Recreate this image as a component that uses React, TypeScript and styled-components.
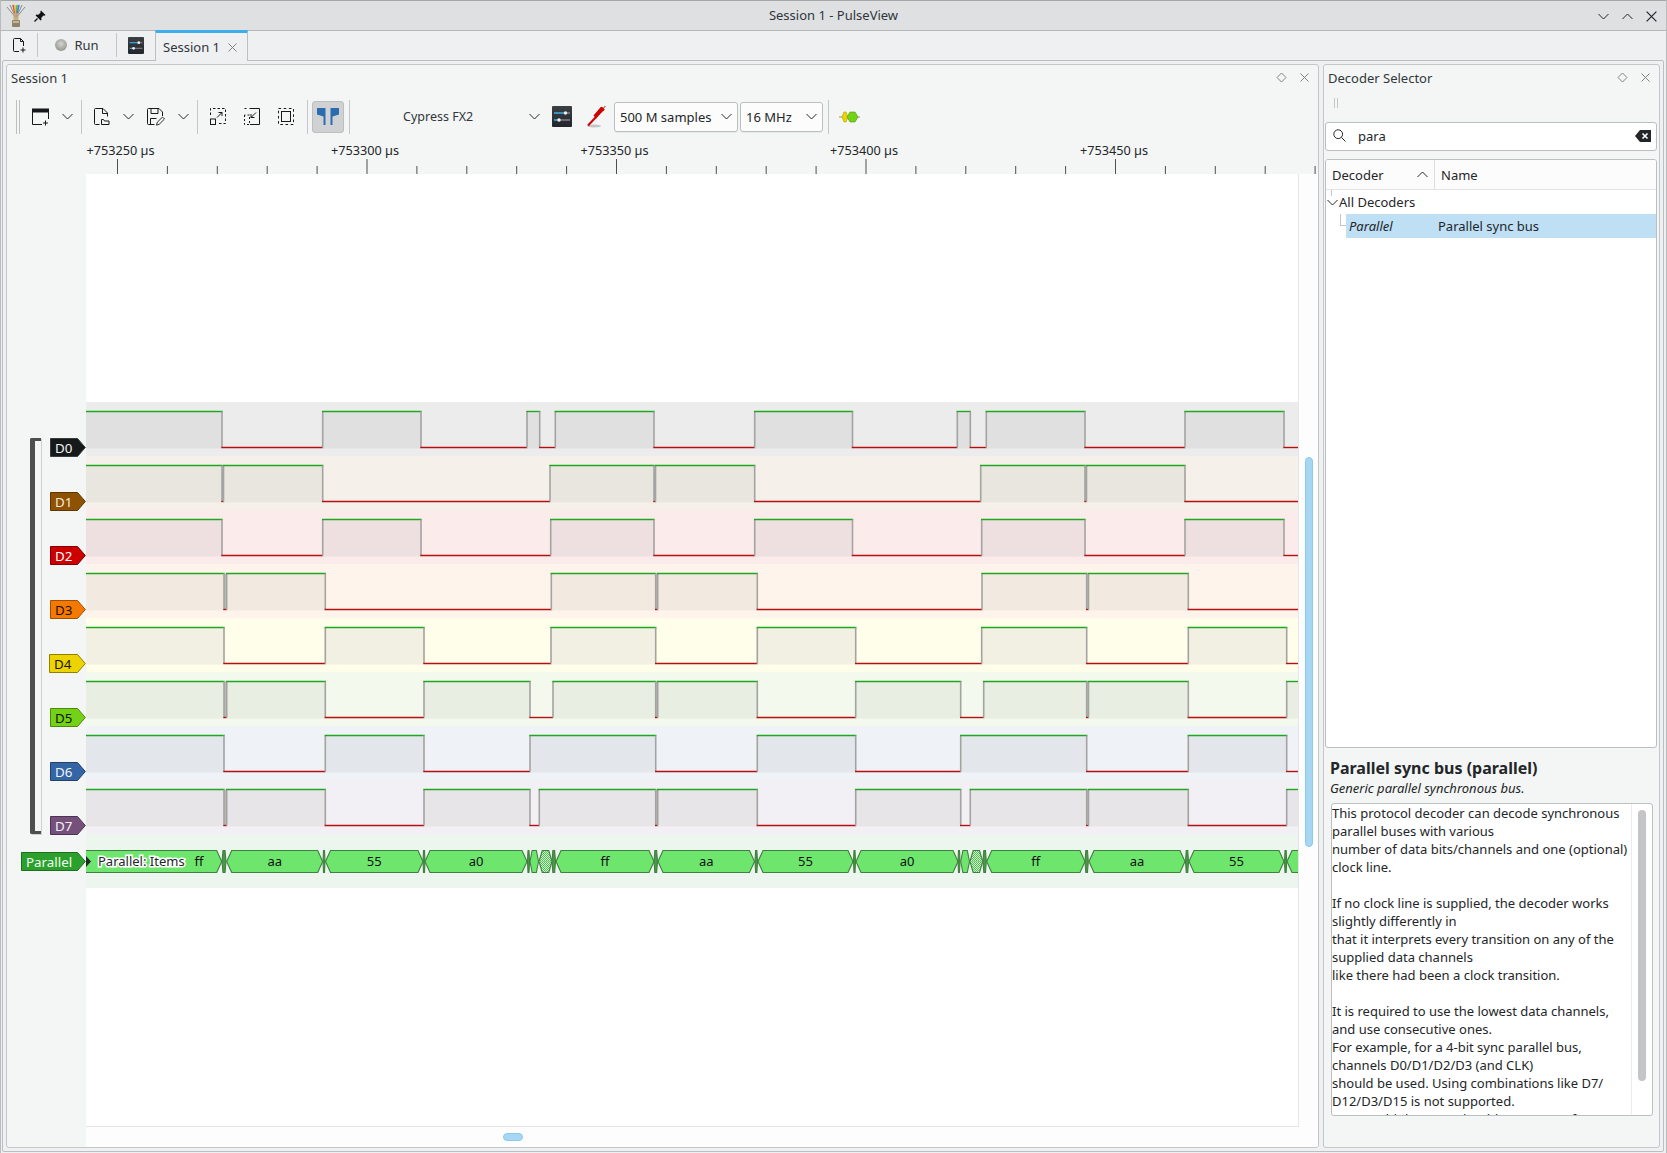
import React from 'react';
import styled, { createGlobalStyle } from 'styled-components';

const FONT = '"Noto Sans", "Open Sans", sans-serif';
const TEXT = '#232629';

const GlobalStyle = createGlobalStyle`
  html, body {
    margin: 0;
    padding: 0;
    background: #eff0f1;
  }
  * {
    box-sizing: border-box;
  }
`;

type Channel = {
  name: string;
  color: string;
  edge: string;
  ink: string;
  bg: string;
  fill: string;
  edges: number[];
};

const CHANNELS: Channel[] = [
  {
    name: 'D0', color: '#16191a', edge: '#3a3d3e', ink: '#f2f2f2', bg: '#ececec', fill: '#e0e0e0',
    edges: [222, 322.7, 421, 527, 539.7, 555.3, 654, 754.7, 852.5, 957.3, 970.3, 986.3, 1085, 1185, 1284],
  },
  {
    name: 'D1', color: '#8f5202', edge: '#5e3601', ink: '#f4ead8', bg: '#f5f1ea', fill: '#e9e6df',
    edges: [222, 223.5, 322.7, 550, 654, 655.5, 754.7, 980.7, 1085, 1086.5, 1185],
  },
  {
    name: 'D2', color: '#cc0000', edge: '#850000', ink: '#ffffff', bg: '#fbebeb', fill: '#eee0e0',
    edges: [222, 322.7, 421, 550.7, 654, 754.7, 852.5, 981.7, 1085, 1185, 1284],
  },
  {
    name: 'D3', color: '#f57900', edge: '#a04f00', ink: '#1a1000', bg: '#fef4eb', fill: '#f2e9e0',
    edges: [224, 226.7, 325.3, 551.3, 655.7, 657.7, 757.3, 982, 1086.7, 1088.5, 1188.3],
  },
  {
    name: 'D4', color: '#edd400', edge: '#8f8000', ink: '#1a1700', bg: '#fefeeb', fill: '#f2f0e2',
    edges: [224, 325.3, 424, 551, 655.7, 757.3, 855.7, 981.7, 1086.7, 1188.3, 1286.7],
  },
  {
    name: 'D5', color: '#73d216', edge: '#4b890e', ink: '#0c1802', bg: '#f3f9ec', fill: '#e8eee2',
    edges: [224, 226.7, 325.3, 424, 530, 553, 655.7, 657.7, 757.3, 855.7, 960.7, 983.7, 1086.7, 1088.5, 1188.3, 1286.7],
  },
  {
    name: 'D6', color: '#3465a4', edge: '#22426b', ink: '#f0f4fa', bg: '#eff2f7', fill: '#e3e6eb',
    edges: [224, 325.3, 424, 530, 655.7, 757.3, 855.7, 960.7, 1086.7, 1188.3, 1286.7],
  },
  {
    name: 'D7', color: '#75507b', edge: '#4c3450', ink: '#f6f0f7', bg: '#f2f0f4', fill: '#e7e5e8',
    edges: [224, 226.7, 325.3, 424, 530, 539.3, 655.7, 657.7, 757.3, 855.7, 960.7, 970.3, 1086.7, 1088.5, 1188.3, 1286.7],
  },
];

type Segment = { x0: number; x1: number; label?: string; cx?: number; kind?: 'thin' | 'hatch' };

const SEGMENTS: Segment[] = [
  { x0: 40, x1: 221.7, label: 'ff', cx: 199 },
  { x0: 222, x1: 226, kind: 'thin' },
  { x0: 226.7, x1: 322.7, label: 'aa' },
  { x0: 323, x1: 325, kind: 'thin' },
  { x0: 325.5, x1: 423, label: '55' },
  { x0: 423, x1: 425, kind: 'thin' },
  { x0: 425, x1: 527, label: 'a0' },
  { x0: 527.5, x1: 529.5, kind: 'thin' },
  { x0: 530, x1: 538.5, kind: 'thin' },
  { x0: 539, x1: 552, kind: 'hatch' },
  { x0: 552, x1: 555.5, kind: 'thin' },
  { x0: 556, x1: 654, label: 'ff' },
  { x0: 654, x1: 657.5, kind: 'thin' },
  { x0: 658, x1: 754.5, label: 'aa' },
  { x0: 755, x1: 757.5, kind: 'thin' },
  { x0: 758, x1: 853, label: '55' },
  { x0: 853.5, x1: 855.5, kind: 'thin' },
  { x0: 856, x1: 958, label: 'a0' },
  { x0: 958, x1: 960, kind: 'thin' },
  { x0: 960.7, x1: 969.5, kind: 'thin' },
  { x0: 970, x1: 982.7, kind: 'hatch' },
  { x0: 983, x1: 986.3, kind: 'thin' },
  { x0: 986.7, x1: 1085, label: 'ff' },
  { x0: 1085, x1: 1088.3, kind: 'thin' },
  { x0: 1089, x1: 1185, label: 'aa' },
  { x0: 1185.5, x1: 1188.5, kind: 'thin' },
  { x0: 1189, x1: 1284, label: '55' },
  { x0: 1284.5, x1: 1286.7, kind: 'thin' },
  { x0: 1287, x1: 1340 },
];

const DESCRIPTION = `This protocol decoder can decode synchronous
parallel buses with various
number of data bits/channels and one (optional)
clock line.

If no clock line is supplied, the decoder works
slightly differently in
that it interprets every transition on any of the
supplied data channels
like there had been a clock transition.

It is required to use the lowest data channels,
and use consecutive ones.
For example, for a 4-bit sync parallel bus,
channels D0/D1/D2/D3 (and CLK)
should be used. Using combinations like D7/
D12/D3/D15 is not supported.
For an 8-bit bus you should use D0-D7, for a`;

const PLOT_LEFT = 86;
const PLOT_WIDTH = 1212;
const ROW_HEIGHT = 54;
const HIGH_Y = 9.5;
const LOW_Y = 45.5;

const Waveform = ({ channel }: { channel: Channel }) => {
  const stops = [PLOT_LEFT, ...channel.edges, PLOT_LEFT + PLOT_WIDTH];
  const parts: React.ReactNode[] = [];

  stops.slice(0, -1).forEach((start, i) => {
    const end = stops[i + 1];
    const a = start - PLOT_LEFT;
    const b = end - PLOT_LEFT;
    const high = i % 2 === 0;
    if (high) {
      parts.push(<rect key={`f${i}`} x={a} y={HIGH_Y} width={b - a} height={LOW_Y - HIGH_Y + 1} fill={channel.fill} />);
    } else if (b - a < 4) {
      parts.push(<rect key={`g${i}`} x={a} y={HIGH_Y} width={b - a} height={LOW_Y - HIGH_Y - 0.5} fill="#bcbcb8" />);
    }
    if (i > 0) {
      parts.push(<line key={`e${i}`} x1={a} x2={a} y1={HIGH_Y} y2={LOW_Y} stroke="#a3a3a0" strokeWidth={1.6} />);
    }
    parts.push(
      <line
        key={`l${i}`}
        x1={a - 0.7}
        x2={b + 0.7}
        y1={high ? HIGH_Y : LOW_Y}
        y2={high ? HIGH_Y : LOW_Y}
        stroke={high ? '#1fa81f' : '#b50f0f'}
        strokeWidth={1.4}
      />,
    );
  });

  return (
    <TraceSvg width={PLOT_WIDTH} height={ROW_HEIGHT}>
      {parts}
    </TraceSvg>
  );
};

const Annotations = () => {
  const top = 16.5;
  const bottom = 38.5;
  const mid = (top + bottom) / 2;
  return (
    <TraceSvg width={PLOT_WIDTH} height={ROW_HEIGHT}>
      <defs>
        <pattern id="hatch" width="2" height="2" patternUnits="userSpaceOnUse">
          <rect width="2" height="2" fill="#cdf2cd" />
          <rect width="1" height="1" fill="#52c052" />
          <rect x="1" y="1" width="1" height="1" fill="#52c052" />
        </pattern>
      </defs>
      {SEGMENTS.map((s, i) => {
        const a = s.x0 - PLOT_LEFT;
        const b = s.x1 - PLOT_LEFT;
        const slant = Math.min(5, (b - a) * 0.25);
        const points = `${a},${mid} ${a + slant},${top} ${b - slant},${top} ${b},${mid} ${b - slant},${bottom} ${a + slant},${bottom}`;
        const fill = s.kind === 'hatch' ? 'url(#hatch)' : b - a < 5 ? '#4f944f' : '#6ee66e';
        return (
          <g key={i}>
            <polygon points={points} fill={fill} stroke="#3f7f3f" strokeWidth={1.1} />
            {s.kind === 'hatch' && <line x1={a} x2={b} y1={mid} y2={mid} stroke="#8fd08f" strokeWidth={0.8} />}
            {s.label && (
              <AnnotationText x={(s.cx ?? (s.x0 + s.x1) / 2) - PLOT_LEFT} y={mid + 4.5} textAnchor="middle">
                {s.label}
              </AnnotationText>
            )}
          </g>
        );
      })}
      <polygon points="0,22 5,27.5 0,33" fill="#222629" />
      <ItemsText x={12} y={32}>
        Parallel: Items
      </ItemsText>
    </TraceSvg>
  );
};

const TraceLabel = ({ text, width, color, edge, ink }: { text: string; width: number; color: string; edge: string; ink: string }) => (
  <svg width={width} height={19} style={{ display: 'block' }}>
    <polygon
      points={`0.5,0.5 ${width - 8.5},0.5 ${width - 0.7},9.5 ${width - 8.5},18.5 0.5,18.5`}
      fill={color}
      stroke={edge}
      strokeWidth={1}
    />
    <LabelText x={5} y={14.5} fill={ink}>
      {text}
    </LabelText>
  </svg>
);

const Ruler = () => {
  const ticks = Array.from({ length: 25 }, (_, i) => 117.5 + i * 49.9);
  const labels = [
    { x: 86.5, text: '+753250 µs' },
    { x: 331, text: '+753300 µs' },
    { x: 580.5, text: '+753350 µs' },
    { x: 830, text: '+753400 µs' },
    { x: 1080, text: '+753450 µs' },
  ];
  return (
    <RulerSvg width={1311} height={40}>
      {labels.map((l) => (
        <RulerText key={l.text} x={l.x - 7} y={20.5}>
          {l.text}
        </RulerText>
      ))}
      {ticks.map((x, i) => (
        <line key={x} x1={x - 7} x2={x - 7} y1={i % 5 === 0 ? 25 : 32} y2={40} stroke="#3a3d3f" strokeWidth={0.9} />
      ))}
    </RulerSvg>
  );
};

/* ---- icons ---- */

const Chevron = ({ up }: { up?: boolean }) => (
  <svg width="11" height="7" viewBox="0 0 11 7">
    <path d={up ? 'M.5 6 5.5 1l5 5' : 'M.5 1l5 5 5-5'} fill="none" stroke={TEXT} strokeWidth="1" />
  </svg>
);

const AppLogo = () => (
  <svg width="20" height="24" viewBox="0 0 20 24">
    <path d="M10 14 1 3M10 14 4 1M10 14 19 3M10 14 16 1" stroke="#8a8d8f" strokeWidth="1" />
    <path d="M10 14 7 1" stroke="#d9534f" strokeWidth="1.6" />
    <path d="M10 14 9 1" stroke="#e8c33a" strokeWidth="1.6" />
    <path d="M10 14 11 1" stroke="#5cb85c" strokeWidth="1.6" />
    <path d="M10 14 13 1" stroke="#4a80c4" strokeWidth="1.6" />
    <path d="M7 9h6l-.6 7H7.6z" fill="#c9a877" opacity=".85" />
    <rect x="6" y="16" width="8" height="7" rx="1" fill="#8f8468" />
    <rect x="7" y="17" width="6" height="2" fill="#c4b797" />
  </svg>
);

const PinIcon = () => (
  <svg width="12" height="12" viewBox="0 0 12 12">
    <path d="M7 .5 11.5 5l-1 .8-1-.3L7.3 7.7l.2 2-.9.8L1.6 5.5l.8-.9 2 .2 2.2-2.2-.3-1z" fill="#111" />
    <path d="M3.5 8.5 .5 11.5" stroke="#111" strokeWidth="1.2" />
  </svg>
);

const NewPageIcon = () => (
  <svg width="16" height="16" viewBox="0 0 16 16" fill="none" stroke="#16191a" strokeWidth="1">
    <path d="M8 14.5H3.5a1 1 0 0 1-1-1v-11a1 1 0 0 1 1-1h6l3 3V9" />
    <path d="M9.5 1.5v3h3" />
    <path d="M12 10.5v5M9.5 13h5" />
  </svg>
);

const SlidersIcon = ({ size }: { size: number }) => (
  <svg width={size} height={size + 1} viewBox="0 0 20 21">
    <defs>
      <linearGradient id={`sl${size}`} x1="0" y1="0" x2="0" y2="1">
        <stop offset="0" stopColor="#3b4045" />
        <stop offset="1" stopColor="#22262a" />
      </linearGradient>
    </defs>
    <rect width="20" height="21" rx="1" fill={`url(#sl${size})`} />
    <path d="M2 7h11" stroke="#3daee9" strokeWidth="1.4" />
    <path d="M13 7h5" stroke="#7f8488" strokeWidth="1.4" />
    <circle cx="13.5" cy="7" r="1.7" fill="#f2f2f2" />
    <path d="M2 14h5" stroke="#3daee9" strokeWidth="1.4" />
    <path d="M7 14h11" stroke="#7f8488" strokeWidth="1.4" />
    <circle cx="7" cy="14" r="1.7" fill="#f2f2f2" />
  </svg>
);

const NewViewIcon = () => (
  <svg width="17" height="18" viewBox="0 0 17 18" fill="none" stroke="#16191a">
    <rect x=".5" y="1" width="16" height="3" fill="#16191a" />
    <path d="M.5 3v13.5H10M16.5 3v8" />
    <path d="M13.5 12.5v5M11 15h5" />
  </svg>
);

const OpenFileIcon = () => (
  <svg width="16" height="18" viewBox="0 0 16 18" fill="none" stroke="#16191a">
    <path d="M5.5 16.5h-4a1 1 0 0 1-1-1v-14a1 1 0 0 1 1-1H9l4.5 4.5v3.5" />
    <path d="M8.5 1v4.5h5" />
    <path d="M7.5 16.5v-5h2l1 1.5h4.5v3.5z" />
  </svg>
);

const SaveAsIcon = () => (
  <svg width="18" height="18" viewBox="0 0 18 18" fill="none" stroke="#16191a">
    <path d="M7.5 16.5h-6a1 1 0 0 1-1-1V1.5a1 1 0 0 1 1-1H12l3.5 3.5V8" />
    <path d="M4 .5v5h7v-5M3.5 16.5v-6h6" />
    <path d="M9.5 17.2l.8-3 5.2-5.2 2 2-5.2 5.2z" strokeWidth=".9" />
  </svg>
);

const ZoomFitIcon = () => (
  <svg width="16" height="17" viewBox="0 0 16 17" fill="none" stroke="#16191a">
    <path d="M.5 7V.5h15v15H9" strokeDasharray="2.5 2" />
    <rect x=".5" y="11" width="5" height="5.5" />
    <path d="M7 9.5l5-5M8.5 4.5H12V8" />
  </svg>
);

const ZoomOneIcon = () => (
  <svg width="16" height="17" viewBox="0 0 16 17" fill="none" stroke="#16191a">
    <path d="M5.5 .5h10v16H6" />
    <path d="M.5 7v9.5h5V7zM.5 .5h4" strokeDasharray="2 2" />
    <path d="M12 4.5l-5 5M7 6v3.5h3.5" />
  </svg>
);

const ZoomSelectIcon = () => (
  <svg width="16" height="17" viewBox="0 0 16 17" fill="none" stroke="#16191a">
    <path d="M.5 .5h15v16H.5z" strokeDasharray="2.6 2.6" />
    <rect x="3.5" y="3.5" width="9" height="10" />
  </svg>
);

const CursorsIcon = () => (
  <svg width="22" height="17" viewBox="0 0 22 17" fill="#2b6cb0">
    <path d="M0 0h8.5v17H6.5V8.5L0 6.5z" />
    <path d="M22 0h-8.5v17h2V8.5l6.5-2z" />
  </svg>
);

const ProbeIcon = () => (
  <svg width="19" height="22" viewBox="0 0 19 22">
    <ellipse cx="7" cy="20" rx="7" ry="1.4" fill="#c4c4c4" />
    <path d="M1 19.5 9 11" stroke="#cc0000" strokeWidth="2" />
    <path d="M6.5 9.5l6-7 1.5-1.7 1.6.4 2 2-.4 1.4-1.6.9-6.4 7z" fill="#cc0000" />
    <path d="M16 2.5 18.5 0" stroke="#cc0000" strokeWidth="1" />
  </svg>
);

const DecoderIcon = () => (
  <svg width="21" height="12" viewBox="0 0 21 12">
    <path d="M0 6h21" stroke="#7a7a50" strokeWidth=".8" />
    <polygon points="3,6 5,1 7,1 9,6 7,11 5,11" fill="#edd400" stroke="#b39c00" strokeWidth=".6" />
    <polygon points="8,6 11,1 16,1 19,6 16,11 11,11" fill="#73d216" stroke="#4e9a06" strokeWidth=".6" />
  </svg>
);

const DiamondIcon = () => (
  <svg width="11" height="11" viewBox="0 0 11 11">
    <path d="M5.5 1 10 5.5 5.5 10 1 5.5z" fill="none" stroke="#7f8284" />
  </svg>
);

const CloseIcon = ({ size = 9, color = '#7f8284' }: { size?: number; color?: string }) => (
  <svg width={size} height={size} viewBox="0 0 9 9">
    <path d="M.5.5l8 8M8.5.5l-8 8" stroke={color} fill="none" />
  </svg>
);

const SearchIcon = () => (
  <svg width="13" height="13" viewBox="0 0 13 13" fill="none" stroke={TEXT}>
    <circle cx="5.2" cy="5.2" r="4.4" />
    <path d="M8.5 8.5l4 4" />
  </svg>
);

const ClearIcon = () => (
  <svg width="16" height="12" viewBox="0 0 16 12">
    <path d="M5 0h11v12H5L0 6z" fill="#232629" />
    <path d="M7.5 3.5l5 5M12.5 3.5l-5 5" stroke="#fff" strokeWidth="1.6" />
  </svg>
);

/* ---- page ---- */

const App: React.FC = () => (
  <Window>
    <GlobalStyle />
    <TitleBar>
      <TitleIcons>
        <AppLogo />
        <PinIcon />
      </TitleIcons>
      <WindowTitle>Session 1 - PulseView</WindowTitle>
      <WindowButtons>
        <Chevron />
        <Chevron up />
        <CloseIcon size={11} color="#232629" />
      </WindowButtons>
    </TitleBar>

    <TabBar>
      <TabTool $width={37}>
        <NewPageIcon />
      </TabTool>
      <TabTool $width={79}>
        <RunLamp />
        Run
      </TabTool>
      <TabTool $width={38} $plain>
        <SlidersIcon size={16} />
      </TabTool>
      <ActiveTab>
        Session 1
        <CloseIcon />
      </ActiveTab>
    </TabBar>

    <Workspace>
      <SessionDock>
        <DockTitle>
          Session 1
          <DockButtons>
            <DiamondIcon />
            <CloseIcon />
          </DockButtons>
        </DockTitle>

        <Toolbar>
          <Handle />
          <ToolButton $width={32}>
            <NewViewIcon />
          </ToolButton>
          <ToolButton $width={22}>
            <Chevron />
          </ToolButton>
          <Separator />
          <ToolButton $width={32}>
            <OpenFileIcon />
          </ToolButton>
          <ToolButton $width={21}>
            <Chevron />
          </ToolButton>
          <ToolButton $width={33}>
            <SaveAsIcon />
          </ToolButton>
          <ToolButton $width={22}>
            <Chevron />
          </ToolButton>
          <Separator />
          <ZoomGroup>
            <ToolButton $width={32}>
              <ZoomFitIcon />
            </ToolButton>
            <ToolButton $width={32}>
              <ZoomOneIcon />
            </ToolButton>
            <ToolButton $width={32}>
              <ZoomSelectIcon />
            </ToolButton>
          </ZoomGroup>
          <Separator />
          <ToggledButton>
            <CursorsIcon />
          </ToggledButton>
          <Separator />
          <DeviceCombo>
            Cypress FX2
            <Chevron />
          </DeviceCombo>
          <ToolButton $width={34}>
            <SlidersIcon size={20} />
          </ToolButton>
          <ToolButton $width={34}>
            <ProbeIcon />
          </ToolButton>
          <Combo $width={124} $left={1}>
            500 M samples
            <Chevron />
          </Combo>
          <Combo $width={83} $left={2} $right={2}>
            16 MHz
            <Chevron />
          </Combo>
          <Separator />
          <ToolButton $width={32}>
            <DecoderIcon />
          </ToolButton>
        </Toolbar>

        <Ruler />

        <ViewBody>
          <Gutter>
            <Bracket />
            {CHANNELS.map((c) => (
              <LabelSlot key={c.name} $top={36}>
                <TraceLabel text={c.name} width={c.name === 'D4' ? 37 : 36} color={c.color} edge={c.edge} ink={c.ink} />
              </LabelSlot>
            ))}
            <LabelSlot $top={18}>
              <TraceLabel text="Parallel" width={65} color="#2ca02c" edge="#1c701c" ink="#f2fff2" />
            </LabelSlot>
          </Gutter>

          <Canvas>
            <CanvasMain>
              <Plot>
                {CHANNELS.map((c) => (
                  <TraceRow key={c.name} $bg={c.bg}>
                    <Waveform channel={c} />
                  </TraceRow>
                ))}
                <TraceRow $bg="#edf6ee">
                  <Annotations />
                </TraceRow>
              </Plot>
              <VerticalTrack>
                <VerticalThumb />
              </VerticalTrack>
            </CanvasMain>
            <HorizontalTrack>
              <HorizontalThumb />
            </HorizontalTrack>
          </Canvas>
        </ViewBody>
      </SessionDock>

      <DecoderDock>
        <DecoderTitle>
          Decoder Selector
          <DockButtons>
            <DiamondIcon />
            <CloseIcon />
          </DockButtons>
        </DecoderTitle>
        <SmallHandle />
        <SearchBox>
          <SearchIcon />
          <SearchText>para</SearchText>
          <ClearIcon />
        </SearchBox>
        <TreeFrame>
          <TreeHeader>
            <DecoderColumn>
              Decoder
              <Chevron up />
            </DecoderColumn>
            <NameColumn>Name</NameColumn>
          </TreeHeader>
          <TreeGroup>
            <TreeStem />
            <Chevron />
            All Decoders
          </TreeGroup>
          <TreeItem>
            <TreeBranch />
            <TreeItemRow>
              <ItemName>Parallel</ItemName>
              <span>Parallel sync bus</span>
            </TreeItemRow>
          </TreeItem>
        </TreeFrame>
        <InfoTitle>Parallel sync bus (parallel)</InfoTitle>
        <InfoSubtitle>Generic parallel synchronous bus.</InfoSubtitle>
        <DescriptionBox>
          <DescriptionText>{DESCRIPTION}</DescriptionText>
          <DescriptionScroll>
            <DescriptionThumb />
          </DescriptionScroll>
        </DescriptionBox>
      </DecoderDock>
    </Workspace>
  </Window>
);

const Window = styled.div`
  width: 1667px;
  height: 1153px;
  overflow: hidden;
  display: flex;
  flex-direction: column;
  background: #eff0f1;
  color: ${TEXT};
  font-family: ${FONT};
  font-size: 13px;
  border-left: 1px solid #b9bbbd;
  border-right: 1px solid #b9bbbd;
`;

const TitleBar = styled.div`
  position: relative;
  height: 31px;
  flex: none;
  padding-bottom: 2px;
  display: flex;
  align-items: center;
  justify-content: center;
  background: #dee0e2;
  border-top: 1px solid #a4a6a8;
  border-bottom: 1px solid #b4b6b8;
`;

const TitleIcons = styled.div`
  position: absolute;
  left: 5px;
  top: 3px;
  display: flex;
  align-items: center;
  gap: 8px;
`;

const WindowTitle = styled.div`
  color: #31363b;
`;

const WindowButtons = styled.div`
  position: absolute;
  right: 9px;
  top: 10px;
  display: flex;
  align-items: center;
  gap: 13px;
`;

const TabBar = styled.div`
  height: 29px;
  flex: none;
  display: flex;
`;

const TabTool = styled.div<{ $width: number; $plain?: boolean }>`
  width: ${(p) => p.$width}px;
  display: flex;
  align-items: center;
  justify-content: center;
  gap: 7px;
  margin: 2px 0 3px;
  border-right: ${(p) => (p.$plain ? 'none' : '1px solid #c4c6c8')};
  color: #31363b;
`;

const RunLamp = styled.span`
  width: 12px;
  height: 12px;
  border-radius: 50%;
  background: radial-gradient(circle at 50% 40%, #d5d5d0, #8f8f8a 85%);
`;

const ActiveTab = styled.div`
  position: relative;
  z-index: 1;
  width: 93px;
  height: 31px;
  margin-top: -1px;
  padding-left: 7px;
  display: flex;
  align-items: center;
  gap: 8px;
  background: #eff0f1;
  border-top: 3px solid #3daee9;
  border-right: 1px solid #bcbebf;
  border-left: 1px solid #bcbebf;
  color: #31363b;
`;

const Workspace = styled.div`
  flex: 1;
  min-height: 0;
  margin: 0 2px 1px 1px;
  padding: 3px;
  display: flex;
  gap: 4px;
  border: 1px solid #bcbebf;
  border-radius: 2px;
`;

const Dock = styled.div`
  display: flex;
  flex-direction: column;
  background: #f4f6f5;
  border: 1px solid #c4c6c7;
  border-radius: 3px;
  overflow: hidden;
`;

const SessionDock = styled(Dock)`
  width: 1313px;
  flex: none;
`;

const DecoderDock = styled(Dock)`
  width: 337px;
  flex: none;
  padding: 0 1px;
`;

const DockTitle = styled.div`
  height: 34px;
  flex: none;
  display: flex;
  align-items: center;
  justify-content: space-between;
  padding: 0 9px 8px 4px;
  color: #31363b;
`;

const DecoderTitle = styled(DockTitle)`
  padding: 0 8px 8px 3px;
`;

const DockButtons = styled.div`
  display: flex;
  align-items: center;
  gap: 13px;
  margin-top: -2px;
`;

const Toolbar = styled.div`
  height: 35px;
  flex: none;
  padding-left: 9px;
  display: flex;
  align-items: center;
`;

const Handle = styled.div`
  width: 4px;
  height: 34px;
  margin-right: 4px;
  border-left: 1px solid #bcbebf;
  border-right: 1px solid #bcbebf;
`;

const ToolButton = styled.div<{ $width: number }>`
  width: ${(p) => p.$width}px;
  height: 32px;
  flex: none;
  display: flex;
  align-items: center;
  justify-content: center;
`;

const ZoomGroup = styled.div`
  display: flex;
  gap: 2px;
  margin-right: 2px;
`;

const Separator = styled.div`
  width: 1px;
  height: 34px;
  flex: none;
  margin: 0 4px 0 3px;
  background: #c4c6c7;
`;

const ToggledButton = styled.div`
  width: 32px;
  height: 32px;
  margin-right: 2px;
  flex: none;
  display: flex;
  align-items: center;
  justify-content: center;
  background: #cfd1d2;
  border: 1px solid #bcbebf;
  border-radius: 3px;
`;

const DeviceCombo = styled.div`
  width: 191px;
  flex: none;
  padding: 0 5px 0 49px;
  display: flex;
  align-items: center;
  justify-content: space-between;
  font-size: 12.5px;
  color: #31363b;
`;

const Combo = styled.div<{ $width: number; $left?: number; $right?: number }>`
  width: ${(p) => p.$width}px;
  height: 30px;
  flex: none;
  margin-left: ${(p) => p.$left ?? 0}px;
  margin-right: ${(p) => p.$right ?? 0}px;
  padding: 0 5px 0 5px;
  display: flex;
  align-items: center;
  justify-content: space-between;
  background: #fcfcfc;
  border: 1px solid #bcbec0;
  border-radius: 3px;
  box-shadow: 0 1px 1px rgba(0, 0, 0, 0.06);
`;

const RulerSvg = styled.svg`
  display: block;
  flex: none;
`;

const RulerText = styled.text`
  font-family: ${FONT};
  font-size: 12.7px;
  fill: ${TEXT};
`;

const ViewBody = styled.div`
  flex: 1;
  min-height: 0;
  display: flex;
`;

const Gutter = styled.div`
  position: relative;
  width: 79px;
  flex: none;
  padding-top: 228px;
`;

const Bracket = styled.div`
  position: absolute;
  left: 23px;
  top: 264px;
  width: 11px;
  height: 396px;
  border: 3px solid #4d4e4d;
  border-left-width: 5px;
  border-right: none;
  border-radius: 2px 0 0 2px;
  box-shadow: 1px 1px 0 rgba(0, 0, 0, 0.15);
`;

const LabelSlot = styled.div<{ $top: number }>`
  height: 54px;
  padding-top: ${(p) => p.$top}px;
  display: flex;
  justify-content: flex-end;
`;

const LabelText = styled.text`
  font-family: ${FONT};
  font-size: 13.33px;
`;

const Canvas = styled.div`
  flex: 1;
  min-width: 0;
  display: flex;
  flex-direction: column;
  background: #fdfdfd;
`;

const CanvasMain = styled.div`
  height: 953px;
  flex: none;
  display: flex;
`;

const Plot = styled.div`
  width: 1213px;
  flex: none;
  padding-top: 228px;
  background: #ffffff;
  border-right: 1px solid #e6e6e6;
  border-bottom: 1px solid #e6e6e6;
`;

const TraceRow = styled.div<{ $bg: string }>`
  height: ${ROW_HEIGHT}px;
  background: ${(p) => p.$bg};
`;

const TraceSvg = styled.svg`
  display: block;
`;

const AnnotationText = styled.text`
  font-family: ${FONT};
  font-size: 13px;
  fill: #111;
`;

const ItemsText = styled.text`
  font-family: ${FONT};
  font-size: 13px;
  fill: #222629;
  stroke: #ffffff;
  stroke-width: 3px;
  paint-order: stroke;
`;

const VerticalTrack = styled.div`
  flex: 1;
  padding: 283px 0 0 6px;
`;

const VerticalThumb = styled.div`
  width: 8px;
  height: 390px;
  background: #a6d6f2;
  border: 1px solid #8ccbf0;
  border-radius: 4px;
`;

const HorizontalTrack = styled.div`
  flex: 1;
  display: flex;
  align-items: center;
  padding-left: 417px;
`;

const HorizontalThumb = styled.div`
  width: 20px;
  height: 8px;
  background: #a6d6f2;
  border: 1px solid #8ccbf0;
  border-radius: 4px;
`;

const SmallHandle = styled.div`
  width: 4px;
  height: 10px;
  flex: none;
  margin: -1px 0 14px 9px;
  border-left: 1px solid #c4c6c7;
  border-right: 1px solid #c4c6c7;
`;

const SearchBox = styled.div`
  height: 29px;
  flex: none;
  margin-right: 1px;
  padding: 0 5px 2px 7px;
  display: flex;
  align-items: center;
  background: #fff;
  border: 1px solid #bcbec0;
  border-radius: 3px;
`;

const SearchText = styled.span`
  flex: 1;
  margin-left: 12px;
`;

const TreeFrame = styled.div`
  height: 589px;
  flex: none;
  margin: 8px 1px 0 0;
  background: #fff;
  border: 1px solid #bcbec0;
  border-radius: 3px;
  overflow: hidden;
`;

const TreeHeader = styled.div`
  height: 30px;
  display: flex;
  background: #fcfcfc;
  border-bottom: 1px solid #e2e3e4;
`;

const DecoderColumn = styled.div`
  width: 109px;
  flex: none;
  padding: 0 6px 0 6px;
  display: flex;
  align-items: center;
  justify-content: space-between;
  border-right: 1px solid #dcddde;
`;

const NameColumn = styled.div`
  flex: 1;
  padding-left: 6px;
  display: flex;
  align-items: center;
`;

const TreeGroup = styled.div`
  position: relative;
  height: 24px;
  padding-left: 1px;
  display: flex;
  align-items: center;
  gap: 1px;
`;

const TreeStem = styled.div`
  position: absolute;
  left: 5px;
  top: 0;
  height: 6px;
  border-left: 1px solid #c4c6c7;
`;

const TreeItem = styled.div`
  display: flex;
  height: 24px;
  padding-left: 14px;
`;

const TreeBranch = styled.div`
  width: 6px;
  height: 12px;
  flex: none;
  border-left: 1px solid #c4c6c7;
  border-bottom: 1px solid #c4c6c7;
`;

const TreeItemRow = styled.div`
  flex: 1;
  padding-left: 3px;
  display: flex;
  align-items: center;
  background: #bedff4;
`;

const ItemName = styled.span`
  width: 89px;
  flex: none;
  font-style: italic;
`;

const InfoTitle = styled.div`
  margin: 9px 0 0 5px;
  font-size: 16px;
  font-weight: 700;
  line-height: 22px;
`;

const InfoSubtitle = styled.div`
  margin: 1px 0 0 5px;
  font-size: 13px;
  font-style: italic;
  line-height: 16px;
`;

const DescriptionBox = styled.div`
  height: 313px;
  flex: none;
  margin: 7px 5px 0 6px;
  display: flex;
  background: #fff;
  border: 1px solid #bcbec0;
  border-radius: 3px;
  overflow: hidden;
`;

const DescriptionText = styled.div`
  flex: 1;
  white-space: pre;
  line-height: 18px;
  color: #232629;
`;

const DescriptionScroll = styled.div`
  width: 21px;
  flex: none;
  padding: 6px 0 0 6px;
  border-left: 1px solid #ececec;
`;

const DescriptionThumb = styled.div`
  width: 8px;
  height: 271px;
  background: #c4c5c6;
  border-radius: 4px;
`;

export default App;
